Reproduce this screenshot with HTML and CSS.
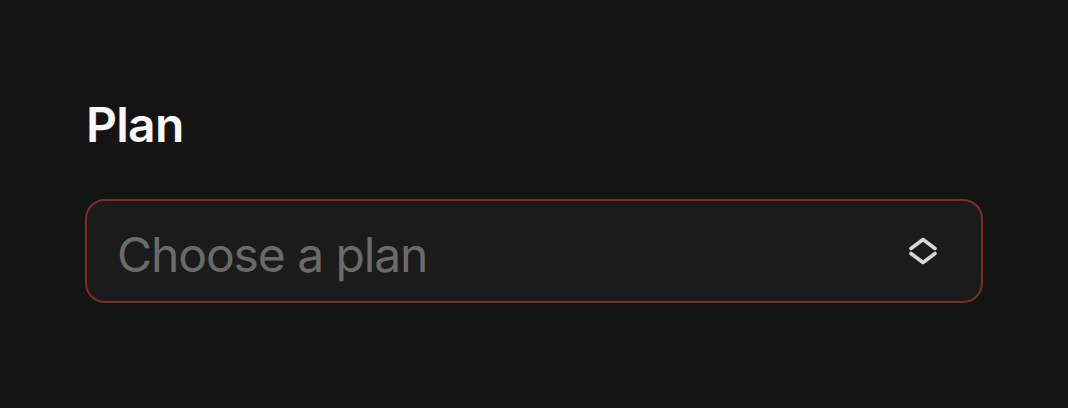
FILE: index.html
```html
<!DOCTYPE html>
<html lang="en">
<head>
<meta charset="utf-8">
<title>Plan</title>
<link rel="stylesheet" href="styles.css">
</head>
<body>
<main class="page">
  <div class="field">
    <label class="label" for="plan">Plan</label>
    <button class="select" id="plan" type="button" aria-invalid="true">
      <span class="placeholder">Choose a plan</span>
      <svg class="chevrons" width="28" height="28" viewBox="0 0 28 28" aria-hidden="true">
        <path d="M2 11.5 L14 2.5 L26 11.5" fill="none" stroke="#d6d6d6" stroke-width="3.6" stroke-linecap="round" stroke-linejoin="round"/>
        <path d="M2 16.5 L14 25.5 L26 16.5" fill="none" stroke="#d6d6d6" stroke-width="3.6" stroke-linecap="round" stroke-linejoin="round"/>
      </svg>
    </button>
  </div>
</main>
</body>
</html>
```
FILE: styles.css
```css
html, body {
  margin: 0;
  padding: 0;
  background: #141414;
}
body {
  font-family: Inter, "Noto Sans", "Liberation Sans", sans-serif;
  width: 1068px;
  height: 408px;
  overflow: hidden;
}
.page {
  padding: 96px 85px 0 85px;
}
.field {
  display: flex;
  flex-direction: column;
  gap: 45px;
  width: 898px;
}
.label {
  color: #f7f7f7;
  font-size: 48px;
  font-weight: 600;
  line-height: 58px;
  letter-spacing: -0.7px;
  padding-left: 1px;
}
.select {
  box-sizing: border-box;
  width: 898px;
  height: 104px;
  display: flex;
  align-items: center;
  justify-content: space-between;
  padding: 0 44px 0 30px;
  background: #1b1b1b;
  border: 2px solid #7a2d32;
  border-radius: 20px;
  font-family: inherit;
  cursor: pointer;
}
.placeholder {
  color: #6a6a6a;
  font-size: 48px;
  font-weight: 400;
  line-height: 58px;
  letter-spacing: -1.1px;
  padding-top: 8px;
}
.chevrons {
  display: block;
}
```
